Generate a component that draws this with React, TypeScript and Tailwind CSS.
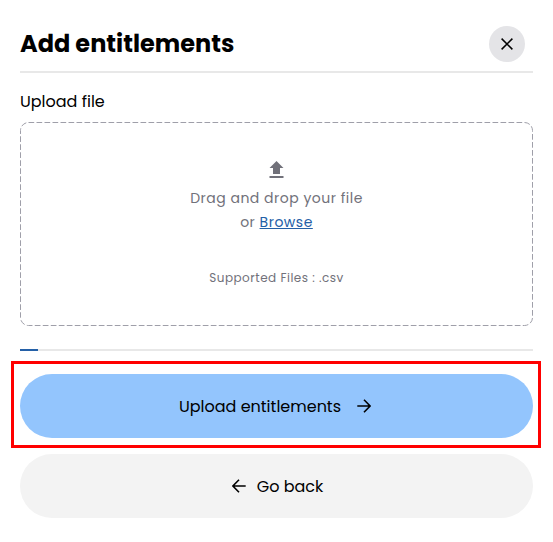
const font = "font-['Poppins','Inter',sans-serif]";

function Arrow({ left = false }: { left?: boolean }) {
  return (
    <svg width="14" height="14" viewBox="0 0 14 14" fill="none" stroke="currentColor" strokeWidth="1.6" className={left ? 'rotate-180' : ''}>
      <path d="M0.3 7H13M7 0.8L13.1 7L7 13.2" />
    </svg>
  );
}

export default function App() {
  return (
    <main className={`${font} h-[542px] w-[553px] overflow-hidden bg-white px-5 pt-4 text-black antialiased`}>
      <header className="flex h-[57px] items-start justify-between border-b-2 border-[#e8e8e8]">
        <h1 className="mt-2.5 text-[24px] leading-9 font-bold whitespace-nowrap">Add entitlements</h1>
        <button aria-label="Close" className="mt-2.5 mr-2 flex size-9 items-center justify-center rounded-full bg-[#e4e4e7]">
          <svg width="12" height="12" viewBox="0 0 12 12" fill="none" stroke="currentColor" strokeWidth="1.5">
            <path d="M0.6 0.6L11.4 11.4M11.4 0.6L0.6 11.4" />
          </svg>
        </button>
      </header>

      <p className="mt-[17px] h-8 text-[16px] leading-6 font-normal">Upload file</p>

      <section className="relative flex h-[204px] flex-col items-center pt-[38px] text-[#71717a]">
        <svg className="absolute inset-0" width="513" height="204" fill="none">
          <rect x="0.5" y="0.5" width="512" height="203" rx="8" stroke="#9f9fa9" strokeDasharray="5.7 2.3" />
        </svg>
        <svg width="17" height="18" viewBox="0 0 17 18" fill="currentColor">
          <path d="M8.5 1L15.5 8H12V14H5V8H1.5ZM1.5 16H15.5V18H1.5Z" />
        </svg>
        <p className="mt-2 text-center text-[14px] leading-6 font-normal whitespace-nowrap">
          <span className="tracking-[0.5px]">Drag and drop your file</span>
          <br />
          <span className="tracking-[0.5px]">or <a className="text-[#2460a7] underline">Browse</a></span>
        </p>
        <p className="mt-[34px] text-[12px] leading-5 tracking-[0.5px]">Supported Files : .csv</p>
      </section>

      <div className="mt-[23px] h-0.5 bg-[#e8e8e8]"><div className="h-full w-[18px] bg-[#2460a7]" /></div>

      <div className="-mx-[9px] mt-2.5 h-[87px] w-[530px] border-[3px] border-[#ff0000] px-1.5 pt-2.5">
        <button className="flex h-16 w-[513px] items-center justify-center gap-4 rounded-full bg-[#93c5fd] pr-[3px] text-[16px] font-normal">
          <span className="pt-0.5">Upload entitlements</span>
          <Arrow />
        </button>
      </div>
      <button className="mt-1.5 flex h-16 w-full items-center justify-center gap-[11px] rounded-full bg-[#f3f3f3] pl-0.5 text-[16px] font-normal">
        <Arrow left />
        <span className="pt-0.5">Go back</span>
      </button>
    </main>
  );
}
